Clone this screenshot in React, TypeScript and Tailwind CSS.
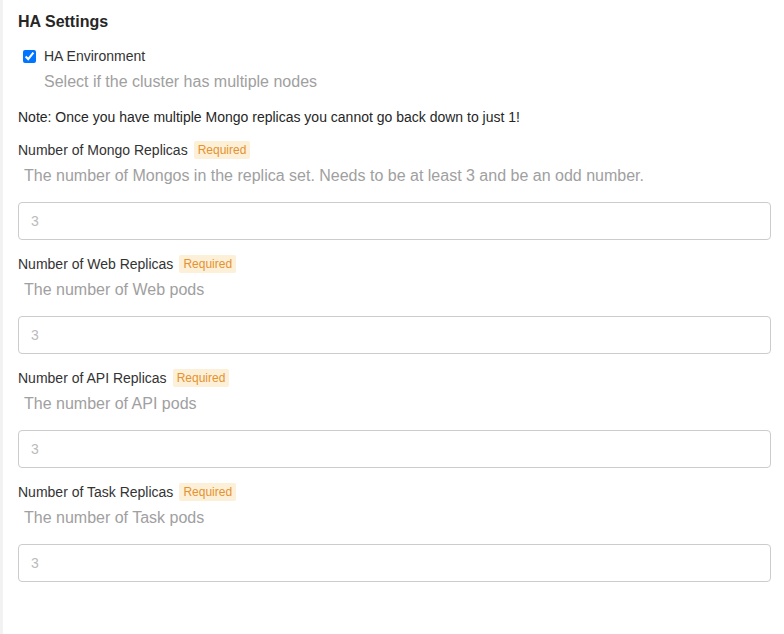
import { useState } from 'react'

type Field = {
  label: string
  desc: string
}

const fields: Field[] = [
  {
    label: 'Number of Mongo Replicas',
    desc: 'The number of Mongos in the replica set. Needs to be at least 3 and be an odd number.',
  },
  { label: 'Number of Web Replicas', desc: 'The number of Web pods' },
  { label: 'Number of API Replicas', desc: 'The number of API pods' },
  { label: 'Number of Task Replicas', desc: 'The number of Task pods' },
]

const ReplicaField = ({ label, desc }: Field) => {
  const [value, setValue] = useState('')
  return (
    <div className="flex flex-col">
      <div className="flex h-[20px] items-center gap-[6px] text-[14px] text-[#333]">
        <span>{label}</span>
        <span className="rounded-[2px] bg-[#fdf0d9] px-[4px] text-[12px] leading-[18px] text-[#e6922d]">
          Required
        </span>
      </div>
      <p className="mt-[4px] pl-[6px] text-[16px] leading-[24px] text-[#a0a0a0]">
        {desc}
      </p>
      <input
        type="text"
        value={value}
        onChange={(e) => setValue(e.target.value)}
        placeholder="3"
        className="mt-[14px] mb-[14px] h-[38px] w-full rounded-[4px] border border-[#cccccc] px-[12px] text-[14px] text-[#333] outline-none placeholder:text-[#bbbbbb]"
      />
    </div>
  )
}

export default function App() {
  const [ha, setHa] = useState(true)

  return (
    <div
      className="min-h-[634px] border-l-[3px] border-[#f2f2f2] bg-white pt-[12px] pr-[13px] pl-[15px]"
      style={{ fontFamily: '"Liberation Sans", Arial, sans-serif' }}
    >
      <h2 className="text-[16px] leading-[20px] font-bold text-[#262626]">
        HA Settings
      </h2>

      <label className="mt-[14px] flex h-[20px] items-center pl-[5px] text-[14px] text-[#333]">
        <input
          type="checkbox"
          checked={ha}
          onChange={() => setHa(!ha)}
          className="m-0 h-[13px] w-[13px] accent-[#0075ff]"
        />
        <span className="ml-[8px]">HA Environment</span>
      </label>
      <p className="mt-[4px] pl-[26px] text-[16px] leading-[24px] text-[#a0a0a0]">
        Select if the cluster has multiple nodes
      </p>

      <p className="mt-[13px] text-[14px] leading-[20px] text-[#262626]">
        Note: Once you have multiple Mongo replicas you cannot go back down to
        just 1!
      </p>

      <div className="mt-[13px] flex flex-col">
        {fields.map((f) => (
          <ReplicaField key={f.label} label={f.label} desc={f.desc} />
        ))}
      </div>
    </div>
  )
}
